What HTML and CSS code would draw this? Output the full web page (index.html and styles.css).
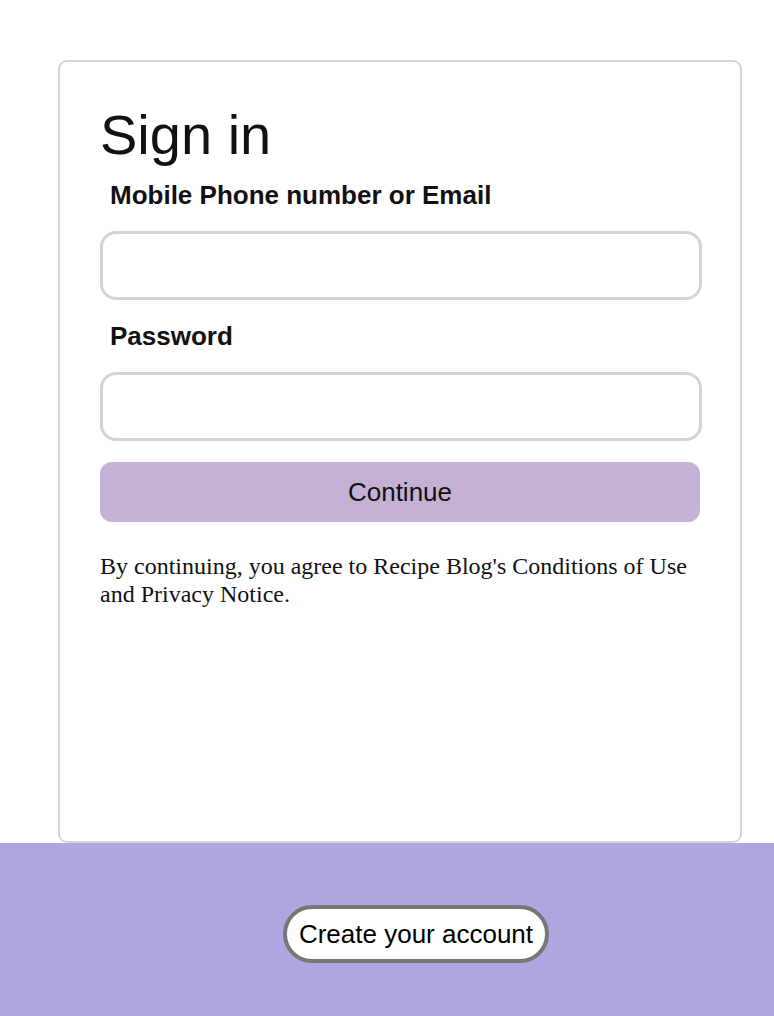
FILE: index.html
```html
<!DOCTYPE html>
<html>
<head>
<meta charset="utf-8">
<link rel="stylesheet" href="styles.css">
</head>
<body>
<main class="page">
  <section class="card">
    <h1 class="title">Sign in</h1>
    <label class="label" for="user">Mobile Phone number or Email</label>
    <input class="field" id="user" type="text">
    <label class="label" for="pass">Password</label>
    <input class="field" id="pass" type="password">
    <button class="continue" type="button">Continue</button>
    <p class="terms">By continuing, you agree to Recipe Blog's Conditions of Use and Privacy Notice.</p>
  </section>
</main>
<footer class="footer">
  <button class="create" type="button">Create your account</button>
</footer>
</body>
</html>
```
FILE: styles.css
```css
html, body {
  margin: 0;
  padding: 0;
  background: #ffffff;
}
body {
  font-family: "Liberation Sans", Arial, sans-serif;
  color: #111;
}
.page {
  padding: 60px 0 0 58px;
}
.card {
  box-sizing: border-box;
  width: 684px;
  height: 783px;
  border: 2px solid #d4d4d4;
  border-radius: 9px;
  padding: 41px 40px 40px 40px;
  display: flex;
  flex-direction: column;
  align-items: flex-start;
}
.title {
  margin: 0 0 13px 0;
  font-size: 56px;
  font-weight: 400;
  line-height: 64px;
}
.label {
  font-size: 26px;
  font-weight: 700;
  line-height: 30px;
  padding-left: 10px;
  margin-bottom: 21px;
}
.field {
  box-sizing: border-box;
  width: 602px;
  height: 69px;
  border: 3px solid #d4d4d4;
  border-radius: 16px;
  margin: 0 0 21px 0;
  padding: 0 16px;
  font-size: 22px;
  outline: none;
  background: #fff;
}
.continue {
  box-sizing: border-box;
  width: 600px;
  height: 60px;
  margin-top: 0;
  border: none;
  border-radius: 12px;
  background: #c4b1d5;
  font-family: "Liberation Sans", Arial, sans-serif;
  font-size: 26px;
  color: #111;
}
.terms {
  margin: 30px 0 0 0;
  font-family: "Liberation Serif", "Times New Roman", serif;
  font-size: 24px;
  line-height: 28px;
  color: #111;
  width: 600px;
}
.footer {
  background: #aea6df;
  height: 173px;
  box-sizing: border-box;
  padding: 62px 0 0 58px;
  display: flex;
  justify-content: center;
  align-items: flex-start;
}
.create {
  box-sizing: border-box;
  height: 58px;
  padding: 0 12px;
  border: 4px solid #767676;
  border-radius: 29px;
  background: #fff;
  font-family: "Liberation Sans", Arial, sans-serif;
  font-size: 26px;
  color: #000;
}
```
